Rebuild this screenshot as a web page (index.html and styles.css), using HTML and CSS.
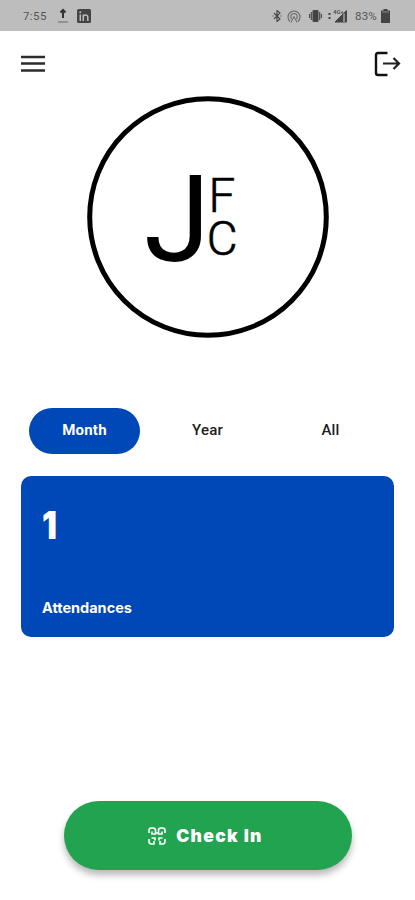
FILE: index.html
```html
<!DOCTYPE html>
<html lang="en">
<head>
    <meta charset="UTF-8">
    <meta name="viewport" content="width=device-width, initial-scale=1.0">
    <title>JFC</title>
    <link rel="stylesheet" href="styles.css">
</head>
<body>
    <div class="status-bar">
        <span class="time">7:55</span>
        <svg class="upload" width="12" height="16" viewBox="0 0 12 16">
            <path d="M6 2v8M3.5 4.5L6 2l2.5 2.5" fill="none" stroke="#333" stroke-width="2"/>
            <path d="M1 14h10" stroke="#666"/>
        </svg>
        <svg class="linkedin" width="14" height="14" viewBox="0 0 14 14">
            <rect width="14" height="14" rx="1.5" fill="#444"/>
            <path d="M3.3 5.5V12M6.3 12V5.5M6.3 8c0-2.5 4.5-2.7 4.5 0v4" fill="none" stroke="#bdbdbd" stroke-width="1.5"/>
            <circle cx="3.3" cy="3.2" r="1" fill="#bdbdbd"/>
        </svg>
        <svg class="bluetooth" width="10" height="12" viewBox="0 0 10 12">
            <path d="M2 3l6 6-3 2.5V.5L8 3 2 9M.5 6h1M8.5 6h1" fill="none" stroke="#444" stroke-width="1.1"/>
        </svg>
        <svg class="hotspot" width="14" height="13" viewBox="0 0 14 13">
            <path d="M3 11.5a6 6 0 1 1 8 0M4.8 9a3.200 3.200 0 1 1 4.400 0" fill="none" stroke="#666" stroke-width="1.1"/>
            <path d="M4 12.5L7 6.5l3 6" fill="none" stroke="#666"/>
        </svg>
        <svg class="vibrate" width="13" height="12" viewBox="0 0 13 12">
            <rect x="3.5" width="6" height="12" rx="1" fill="#444"/>
            <path d="M2.3 2v8M10.7 2v8M.6 4v4M12.4 4v4" stroke="#444" stroke-width="1.1"/>
        </svg>
        <svg class="signal" width="20" height="14" viewBox="0 0 20 14">
            <path d="M1.5 4v2M1.5 8v2" stroke="#444" stroke-width="2"/>
            <path d="M7 13L18.5 1.500V13z" fill="#444" stroke="#444"/>
            <path d="M16 4.5V13" stroke="#bdbdbd" stroke-width="1.2"/>
            <text x="5" y="5" class="network">4G+</text>
        </svg>
        <span class="percent">83%</span>
        <svg class="battery" width="9" height="14" viewBox="0 0 9 14">
            <path d="M2.5 0h4v1.500H9V14H0V1.500h2.500z" fill="#444"/>
            <path d="M1 3h7" stroke="#999" stroke-width=".8"/>
        </svg>
    </div>

    <header>
        <svg width="24" height="18" viewBox="0 0 24 18">
            <path d="M0 2h24M0 8.5h24M0 15.5h24" stroke="#2c2c2c" stroke-width="2.5"/>
        </svg>
        <svg width="28" height="26" viewBox="0 0 28 26">
            <path d="M13.5 2H4Q2 2 2 4v18q0 2 2 2h9.500" fill="none" stroke="#111" stroke-width="2.4"/>
            <path d="M9 12.500h16M19.500 7l5.500 5.500-5.500 5.500" fill="none" stroke="#222" stroke-width="2.2"/>
        </svg>
    </header>

    <div class="logo">
        <svg width="242" height="242" viewBox="0 0 242 242">
            <circle cx="121" cy="121" r="118.3" fill="none" stroke="#000" stroke-width="5"/>
            <text x="57" y="165" class="letter-j">J</text>
            <text x="121.500" y="116" class="letter-small">F</text>
            <text x="119.700" y="159" class="letter-small">C</text>
        </svg>
    </div>

    <nav class="tabs">
        <div class="tab active">Month</div>
        <div class="tab">Year</div>
        <div class="tab">All</div>
    </nav>

    <div class="card">
        <div class="count">1</div>
        <div class="label">Attendances</div>
    </div>

    <button class="check-in">
        <svg width="18" height="18" viewBox="0 0 18 18" fill="none" stroke="#fff" stroke-width="1.6">
            <path d="M1 6V3.500Q1 1 3.500 1H5q2.500 0 2.500 2.500V7H4V4.500M17 6V3.500Q17 1 14.500 1H13q-2.500 0-2.500 2.500V7H14V4.500M1 12v2.500Q1 17 3.500 17H6v-3M3.500 11H7v2.500M17 12v2.500q0 2.500-2.500 2.500H12v-3M14.500 11H11v2.500M7 6h4"/>
        </svg>
        <span>Check In</span>
    </button>
</body>
</html>
```
FILE: styles.css
```css
* {
    box-sizing: border-box;
}

body {
    font-family: Roboto, sans-serif;
    margin: 0;
    height: 900px;
    background: #fff;
    color: #222;
    display: flex;
    flex-direction: column;
}

.status-bar {
    height: 31px;
    padding: 1px 25px 0 23px;
    background: #bdbdbd;
    color: #555;
    display: flex;
    align-items: center;
    font-size: 11.5px;
}

.time {
    width: 34px;
    letter-spacing: 0.4px;
}

.linkedin {
    margin-left: 8px;
}

.bluetooth {
    margin-left: auto;
}

.hotspot {
    margin-left: 5px;
}

.vibrate {
    margin-left: 8px;
}

.signal {
    margin-left: 6px;
}

.network {
    font-size: 6px;
    font-weight: bold;
    fill: #555;
}

.percent {
    margin-left: 7px;
    letter-spacing: 0.2px;
}

.battery {
    margin-left: 4px;
}

header {
    height: 65px;
    padding: 0 13px 0 21px;
    display: flex;
    align-items: center;
    justify-content: space-between;
}

.logo {
    height: 242px;
}

.logo svg {
    display: block;
    margin: 0 auto;
}

.letter-j {
    font-size: 120px;
}

.letter-small {
    font-size: 47.5px;
    font-weight: 300;
    stroke: #000;
    stroke-width: 0.6px;
}

.letter-j, .letter-small {
    fill: #000;
}

.tabs {
    margin: 69.5px 23px 0;
    height: 46px;
    display: flex;
}

.tab {
    flex: 1;
    margin: 0 6px;
    padding-bottom: 2px;
    display: flex;
    align-items: center;
    justify-content: center;
    font-size: 15px;
    font-weight: 500;
    letter-spacing: 0.2px;
}

.tab.active {
    background: #0047b8;
    color: #fff;
    border-radius: 24px;
    font-weight: 700;
}

.card {
    margin: 22.5px 21px 0;
    height: 161px;
    padding: 26px 21px 19px;
    background: #0047b8;
    color: #fff;
    border-radius: 10px;
    display: flex;
    flex-direction: column;
    justify-content: space-between;
    font-family: Inter, sans-serif;
}

.count {
    font-size: 39px;
    line-height: 46px;
    font-weight: 900;
    transform: scaleX(0.85);
    transform-origin: left;
}

.label {
    font-size: 14.5px;
    line-height: 20px;
    font-weight: 700;
}

.check-in {
    margin: 164px 63px 0 64px;
    height: 69px;
    padding: 0 5px 0 0;
    background: #21a350;
    color: #fff;
    border: none;
    border-radius: 35px;
    box-shadow: 0 5px 7px rgba(0, 0, 0, 0.28);
    display: flex;
    align-items: center;
    justify-content: center;
    gap: 10px;
    font-family: Inter, sans-serif;
    font-size: 17.5px;
    font-weight: 900;
    letter-spacing: 1.3px;
}
```
